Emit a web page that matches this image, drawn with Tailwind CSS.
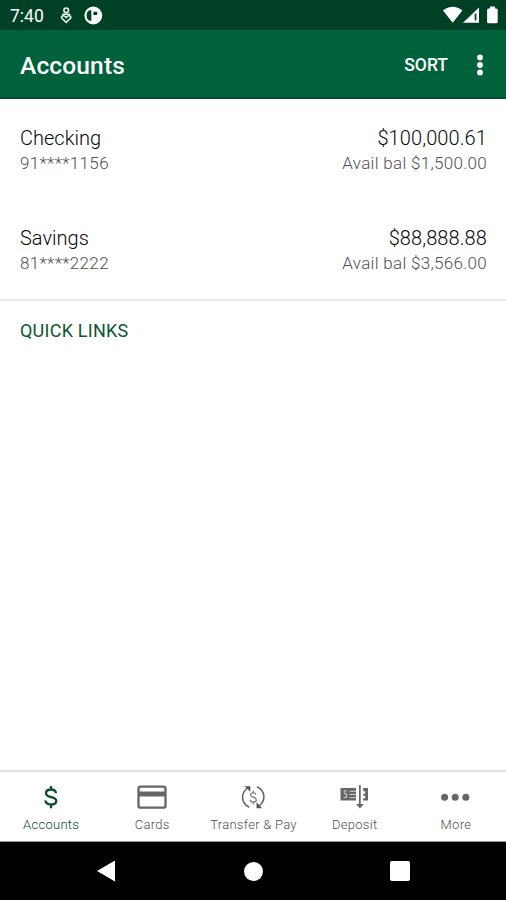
<!DOCTYPE html>
<html lang="en">
<head>
<meta charset="utf-8">
<title>Accounts</title>
<script src="https://cdn.jsdelivr.net/npm/@tailwindcss/browser@4"></script>
</head>
<body class="bg-white">
<div class="flex h-[900px] w-[506px] flex-col overflow-hidden bg-white font-[Roboto,sans-serif] whitespace-nowrap">
  <div class="flex h-[30px] shrink-0 items-center bg-[#004126] pl-[10px] pr-[7px] text-white">
    <span class="w-[48px] pt-[2px] text-[17.500px] leading-[28px]">7:40</span>
    <svg class="h-[30px] w-[52px]" viewBox="58 0 52 30" fill="none" stroke="#e9f3e9" stroke-width="1.600">
      <circle cx="66.200" cy="10.300" r="2.300"/>
      <path d="M62.300 14.200h7.800M66.200 22.300l-4.600-4.300q-.2-2.300 1.700-2.300 1.500 0 2.900 1.800 1.400-1.800 2.900-1.800 1.900 0 1.700 2.300z"/>
      <circle cx="93.300" cy="15.500" r="8.900" fill="#fff" stroke="none"/>
      <path d="M91.300 10.300h-2q-2.700 1.500-2.700 5.200t2.700 5.200h2z" fill="#004126" stroke="none"/>
      <path d="M93.500 11.800h3.400q1 1.500 0 3.200h-3.400z" fill="#004126" stroke="none"/>
    </svg>
    <svg class="ml-auto h-[30px] w-[60px]" viewBox="439 0 60 30" fill="#fff">
      <path d="M443 10.500q9.700-7.500 19.400 0L452.700 22.800z"/>
      <path d="M479 7.500v15.300h-16z"/><path d="M474.700 13.500h1.700v7h-1.700z" fill="#004126"/>
      <path d="M490 6.500h5V8.500h1.200q1.500 0 1.500 1.500v12q0 1.300-1.500 1.300h-7.700q-1.400 0-1.400-1.300V10q0-1.500 1.400-1.500H490z"/>
    </svg>
  </div>
  <header class="flex h-[69px] shrink-0 items-center border-b-2 border-[#05492a] bg-[#00623b] pl-[20px] pr-[20px] text-white">
    <h1 class="pt-[5px] text-[24.500px] leading-[30px] font-medium tracking-[0.150px]">Accounts</h1>
    <span class="ml-auto pt-[3px] text-[17.500px] leading-[24px] font-medium">SORT</span>
    <svg class="ml-[26px] mt-[2px] h-[24px] w-[12px]" viewBox="0 0 12 24" fill="#fff"><circle cx="6" cy="4.500" r="2.900"/><circle cx="6" cy="12" r="2.900"/><circle cx="6" cy="19.500" r="2.900"/></svg>
  </header>
  <main class="flex flex-1 flex-col">
    <div class="flex h-[100px] justify-between pl-[20px] pr-[19px] pt-[26px] font-light">
      <div><div class="text-[20px] leading-[27px] text-[#080808]">Checking</div><div class="text-[17px] leading-[23px] tracking-[0.350px] text-[#505050]">91****1156</div></div>
      <div class="text-right"><div class="text-[20px] leading-[27px] tracking-[0.100px] text-[#080808]">$100,000.61</div><div class="text-[17px] leading-[23px] tracking-[0.300px] text-[#505050]">Avail bal $1,500.00</div></div>
    </div>
    <div class="flex h-[102px] justify-between border-b-2 border-[#e6e6e6] pl-[20px] pr-[19px] pt-[26px] font-light">
      <div><div class="text-[20px] leading-[27px] text-[#080808]">Savings</div><div class="text-[17px] leading-[23px] tracking-[0.350px] text-[#505050]">81****2222</div></div>
      <div class="text-right"><div class="text-[20px] leading-[27px] tracking-[0.100px] text-[#080808]">$88,888.88</div><div class="text-[17px] leading-[23px] tracking-[0.300px] text-[#505050]">Avail bal $3,566.00</div></div>
    </div>
    <h2 class="pl-[20px] pt-[18px] text-[18px] leading-[24px] tracking-[0.240px] text-[#0d5631]">QUICK LINKS</h2>
  </main>
  <nav class="grid h-[72px] shrink-0 grid-cols-5 border-t-2 border-b border-t-[#e1e1e1] border-b-[#999] text-center text-[13px] leading-[18px] font-light tracking-[0.280px] text-[#505050]">
    <div class="flex flex-col items-center pt-[10px] text-[#044a28]">
      <svg class="h-[30px] w-[30px]" viewBox="36 782 30 30" fill="none" stroke="#0b4d2b" stroke-width="2.300"><path d="M56 793.200c-.3-2.400-2.200-3.700-5-3.700-3 0-5 1.400-5 3.700 0 5.100 10.300 2.700 10.300 7.500 0 2.500-2.200 3.800-5.300 3.800-3.200 0-5.300-1.400-5.600-4.100M51 786v3.500M51 804.500v3.700"/></svg>
      <span class="pt-[4px] pl-px">Accounts</span>
    </div>
    <div class="flex flex-col items-center pt-[10px]">
      <svg class="h-[30px] w-[32px]" viewBox="136 782 32 30"><rect x="138.500" y="786.700" width="27" height="21" rx="2" fill="none" stroke="#666" stroke-width="2.300"/><path d="M139 791.500h26v5h-26z" fill="#666"/></svg>
      <span class="pt-[4px] pl-px">Cards</span>
    </div>
    <div class="flex flex-col items-center pt-[10px]">
      <svg class="h-[30px] w-[30px]" viewBox="238 782 30 30" fill="none" stroke="#666" stroke-width="1.600"><path d="M249.300 807.200c-8.200-4-8.800-13.500-2.300-18.700M257 786.800c8.500 4.200 8.800 13.500 2.500 18.700"/><path d="M244.300 786.200h6v5.500zM262.200 808.200h-5.700v-6z" fill="#555" stroke="none"/><path d="M256 794.500c-.4-1.100-1.300-1.700-2.700-1.700-1.700 0-2.700.8-2.700 2 0 3.100 5.700 1.700 5.700 4.900 0 1.500-1.200 2.300-3 2.300-1.700 0-2.800-.7-3.100-2.200M253.300 790.700v2M253.300 802v2.200" stroke-width="1.100"/></svg>
      <span class="pt-[4px] pl-px">Transfer &amp; Pay</span>
    </div>
    <div class="flex flex-col items-center pt-[10px]">
      <svg class="h-[30px] w-[32px]" viewBox="338.500 782 32 30" fill="#666"><path d="M341 788h15.500v12.500H341z"/><path d="M347.500 790.800h-2.800v3h2.500v3.500h-3M350 791.300h6.500M350 794.500h6.500M350 797.700h6.500" fill="none" stroke="#ddd" stroke-width=".9"/><path d="M359.500 785h1.700v19h3l-3.800 4.500-3.800-4.500h2.900zM363.700 788h4.800v12.500h-4.800v-2.300h2v-2.500h-2v-2h2v-2.500h-2z"/></svg>
      <span class="pt-[4px] pl-px">Deposit</span>
    </div>
    <div class="flex flex-col items-center pt-[10px]">
      <svg class="h-[30px] w-[32px]" viewBox="439 782 32 30" fill="#666"><circle cx="444.600" cy="797.300" r="3.500"/><circle cx="455.200" cy="797.300" r="3.500"/><circle cx="465.800" cy="797.300" r="3.500"/></svg>
      <span class="pt-[4px] pl-px">More</span>
    </div>
  </nav>
  <div class="flex h-[58px] shrink-0 items-center justify-between bg-black px-[96px]">
    <svg class="h-[22px] w-[20px]" viewBox="0 0 20 22" fill="#fff"><path d="M1 11L19 .500v21z"/></svg>
    <div class="size-[19px] rounded-full bg-white"></div>
    <div class="size-[20px] rounded-[2px] bg-white"></div>
  </div>
</div>
</body>
</html>
